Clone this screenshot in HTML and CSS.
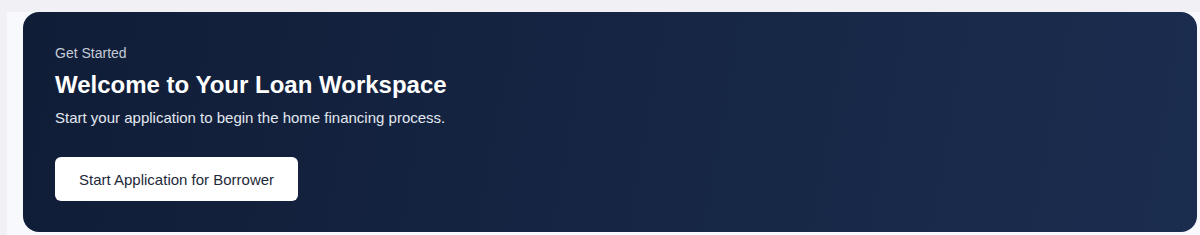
FILE: index.html
```html
<!DOCTYPE html>
<html lang="en">
<head>
    <meta charset="UTF-8">
    <meta name="viewport" content="width=device-width, initial-scale=1.0">
    <title>Loan Workspace</title>
    <link rel="stylesheet" href="styles.css">
</head>
<body>
    <div class="page">
        <div class="content">
            <section class="welcome-card">
                <p class="eyebrow">Get Started</p>
                <h1>Welcome to Your Loan Workspace</h1>
                <p class="lead">Start your application to begin the home financing process.</p>
                <button class="start-button">Start Application for Borrower</button>
            </section>
        </div>
    </div>
</body>
</html>
```

FILE: styles.css
```css
body {
    margin: 0;
    padding: 0;
    font-family: "Liberation Sans", Arial, sans-serif;
    background-color: #f1f0f5;
}

.page {
    padding-top: 12px;
    padding-left: 7px;
}

.content {
    background-color: #f8f9fc;
    padding: 0 3px 8px 16px;
}

.welcome-card {
    background: linear-gradient(100deg, #101d37 0%, #1b2d4f 100%);
    border-radius: 16px;
    padding: 31px 32px 31px;
    color: #fff;
}

.eyebrow {
    margin: 0;
    font-size: 14px;
    line-height: 20px;
    color: #c4ccd8;
}

.welcome-card h1 {
    margin: 6px 0 0;
    font-size: 24px;
    line-height: 32px;
    font-weight: bold;
}

.lead {
    margin: 6px 0 0;
    font-size: 15px;
    line-height: 22px;
    color: #e2e8f0;
}

.start-button {
    margin-top: 28px;
    height: 44px;
    padding: 0 24px;
    border: none;
    border-radius: 6px;
    background-color: #fff;
    color: #1e293b;
    font-family: "Liberation Sans", Arial, sans-serif;
    font-size: 15px;
    cursor: pointer;
}
```
